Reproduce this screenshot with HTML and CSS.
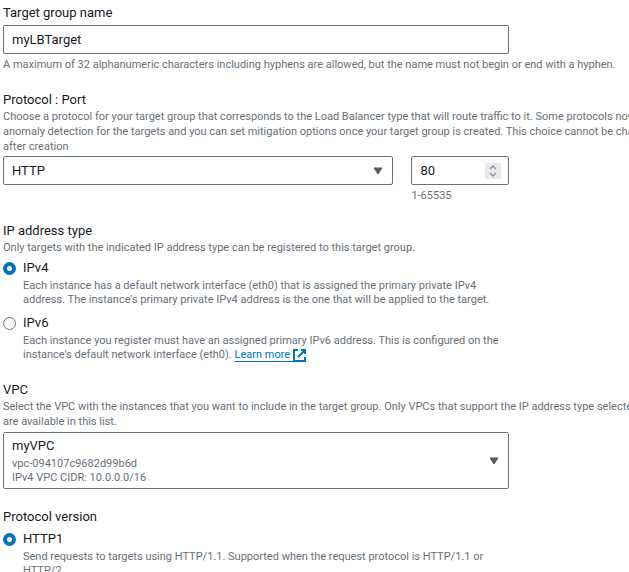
FILE: index.html
```html
<!DOCTYPE html>
<html lang="en">
<head>
  <meta charset="UTF-8">
  <meta name="viewport" content="width=device-width, initial-scale=1">
  <title>Create target group</title>
  <link rel="stylesheet" href="styles.css">
</head>
<body>

  <form class="form">
    <div class="field">
      <label class="label" for="groupName">Target group name</label>
      <input class="control" type="text" id="groupName" value="myLBTarget" spellcheck="false">
      <p class="hint">A maximum of 32 alphanumeric characters including hyphens are allowed, but the name must not begin or end with a hyphen.</p>
    </div>

    <div class="field">
      <label class="label" for="protocol">Protocol : Port</label>
      <p class="description">Choose a protocol for your target group that corresponds to the Load Balancer type that will route traffic to it. Some protocols now include<br>
        anomaly detection for the targets and you can set mitigation options once your target group is created. This choice cannot be changed<br>
        after creation</p>
      <div class="protocol-row">
        <div class="select-wrap">
          <select class="control" id="protocol">
            <option>HTTP</option>
            <option>HTTPS</option>
          </select>
          <svg class="caret" viewBox="0 0 10 8" aria-hidden="true"><path d="M1 1h8L5 7z"/></svg>
        </div>
        <div>
          <div class="select-wrap">
            <input class="control port" type="number" id="port" value="80" min="1" max="65535" aria-label="Port">
            <svg class="stepper" viewBox="0 0 16 16" aria-hidden="true"><path d="M5 6l3-3 3 3M5 10l3 3 3-3"/></svg>
          </div>
          <p class="hint">1-65535</p>
        </div>
      </div>
    </div>

    <div class="field" role="radiogroup" aria-labelledby="ipType">
      <div class="label" id="ipType">IP address type</div>
      <p class="description">Only targets with the indicated IP address type can be registered to this target group.</p>
      <div class="options">
        <div class="option">
          <input class="radio" type="radio" name="ip" id="ipv4" checked>
          <div>
            <label class="label" for="ipv4">IPv4</label>
            <p class="option-text">Each instance has a default network interface (eth0) that is assigned the primary private IPv4<br>
              address. The instance's primary private IPv4 address is the one that will be applied to the target.</p>
          </div>
        </div>
        <div class="option">
          <input class="radio" type="radio" name="ip" id="ipv6">
          <div>
            <label class="label" for="ipv6">IPv6</label>
            <p class="option-text">Each instance you register must have an assigned primary IPv6 address. This is configured on the<br>
              instance's default network interface (eth0). <a class="link" href="#">Learn more <svg class="external" viewBox="0 0 13 13" aria-hidden="true"><path d="M5 1H1v11h11V8M8 1h4v4M12 1L5 8"/></svg></a></p>
          </div>
        </div>
      </div>
    </div>

    <div class="field">
      <label class="label" for="vpc">VPC</label>
      <p class="description">Select the VPC with the instances that you want to include in the target group. Only VPCs that support the IP address type selected above<br>
        are available in this list.</p>
      <div class="select-wrap">
        <select class="control vpc" id="vpc" aria-describedby="vpcDetails">
          <option>myVPC</option>
        </select>
        <div class="vpc-details" id="vpcDetails">vpc-094107c9682d99b6d<br>IPv4 VPC CIDR: 10.0.0.0/16</div>
        <svg class="caret" viewBox="0 0 10 8" aria-hidden="true"><path d="M1 1h8L5 7z"/></svg>
      </div>
    </div>

    <div class="field" role="radiogroup" aria-labelledby="version">
      <div class="label" id="version">Protocol version</div>
      <div class="options">
        <div class="option">
          <input class="radio" type="radio" name="version" id="http1" checked>
          <div>
            <label class="label" for="http1">HTTP1</label>
            <p class="option-text">Send requests to targets using HTTP/1.1. Supported when the request protocol is HTTP/1.1 or<br>
              HTTP/2.</p>
          </div>
        </div>
      </div>
    </div>
  </form>

</body>
</html>
```

FILE: styles.css
```css
* {
  box-sizing: border-box;
}

html {
  overflow: hidden;
}

body {
  margin: 0;
  padding: 4px 3px 0;
  background: #fff;
  color: #16191f;
  font-family: Roboto, "Noto Sans", sans-serif;
  font-size: 13px;
  line-height: 18px;
}

.form {
  display: flex;
  flex-direction: column;
  gap: 19px;
  max-width: 506px;
}

.label {
  display: block;
}

p {
  margin: 0;
  color: #687078;
  font-size: 11px;
  white-space: nowrap;
}

.description {
  line-height: 15px;
}

.hint {
  margin-top: 4px;
  line-height: 14px;
}

.option-text {
  margin-top: 2px;
  line-height: 14px;
}

.control {
  display: block;
  width: 100%;
  height: 29px;
  margin: 0;
  padding: 0 8px;
  border: 1px solid #687078;
  border-radius: 2px;
  background: #fff;
  color: #16191f;
  font: inherit;
  appearance: none;
}

.field > .control,
.field > .select-wrap {
  margin-top: 3px;
}

.protocol-row {
  display: grid;
  grid-template-columns: 4fr 1fr;
  gap: 18px;
  align-items: start;
  margin-top: 2px;
}

/* the icons share one grid cell with the control */
.select-wrap {
  display: grid;
  align-items: center;
}

.select-wrap > * {
  grid-area: 1 / 1;
}

.caret {
  width: 10px;
  height: 8px;
  margin-right: 10px;
  justify-self: end;
  fill: #545b64;
  stroke: #545b64;
  stroke-linejoin: round;
  pointer-events: none;
}

.port {
  appearance: textfield;
}

.port::-webkit-inner-spin-button {
  appearance: none;
}

.stepper {
  width: 16px;
  height: 16px;
  margin-right: 8px;
  justify-self: end;
  background: #e9e9ed;
  fill: none;
  stroke: #8f8f9d;
  stroke-width: 1.3;
  pointer-events: none;
}

.options {
  display: flex;
  flex-direction: column;
  gap: 7px;
  margin-top: 4px;
}

.option {
  display: flex;
  gap: 7px;
}

.radio {
  flex: none;
  width: 13px;
  height: 13px;
  margin: 3px 0 0;
  border: 1px solid #687078;
  border-radius: 50%;
  background: #fff;
  appearance: none;
}

.radio:checked {
  border: 4px solid #0073bb;
}

.link {
  color: #0073bb;
  text-decoration: underline;
  text-underline-offset: 3px;
}

.external {
  width: 13px;
  height: 13px;
  vertical-align: -4px;
  fill: none;
  stroke: #0073bb;
  stroke-width: 2;
}

.vpc {
  height: 57px;
  padding-bottom: 30px;
}

.vpc-details {
  align-self: end;
  padding: 0 9px 4px;
  color: #687078;
  font-size: 11px;
  line-height: 14px;
  pointer-events: none;
}
```
